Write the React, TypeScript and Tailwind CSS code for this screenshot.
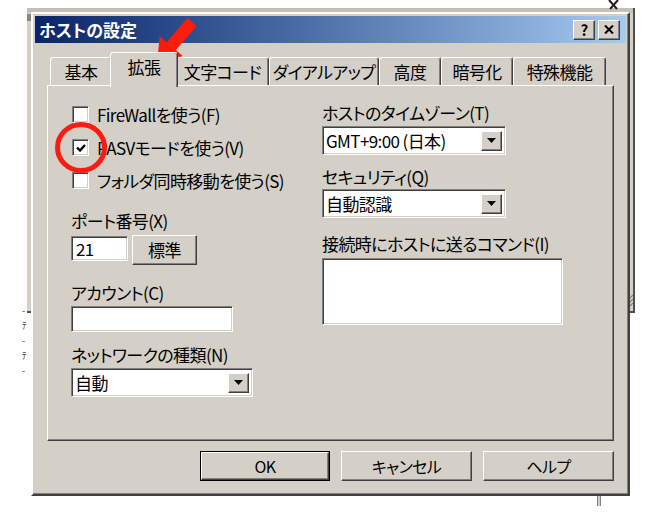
const raised =
  'border border-t-white border-l-white border-b-[#404040] border-r-[#404040] shadow-[inset_-1px_-1px_0_#808080]';
const sunken =
  'border border-t-[#808080] border-l-[#808080] border-b-white border-r-white shadow-[inset_1px_1px_0_#404040,inset_-1px_-1px_0_#d4d0c8]';

function Combo({ value, className }: { value: string; className: string }) {
  return (
    <div className={`flex items-center justify-between bg-white pl-[3px] pr-[3px] ${sunken} ${className}`}>
      <span className="leading-none">{value}</span>
      <div className={`flex h-[20px] w-[21px] items-center justify-center bg-[#d4d0c8] ${raised}`}>
        <svg width="9" height="5" viewBox="0 0 9 5">
          <path d="M0 0h9L4.5 5z" fill="#000" />
        </svg>
      </div>
    </div>
  );
}

function Check({ label, checked = false }: { label: string; checked?: boolean }) {
  return (
    <div className="flex h-[33px] items-center pl-px">
      <div className={`flex h-[17px] w-[17px] items-center justify-center bg-white ${sunken}`}>
        {checked && (
          <svg width="10" height="8" viewBox="0 0 10 8">
            <path d="M1 3.5l3 3 5-5.5" stroke="#000" strokeWidth="2.4" fill="none" />
          </svg>
        )}
      </div>
      <span className="ml-[8px]">{label}</span>
    </div>
  );
}

const tabs = [
  { label: '基本', w: 'w-[62px]' },
  { label: '拡張', w: 'w-[68px]', active: true },
  { label: '文字コード', w: 'w-[93px]' },
  { label: 'ダイアルアップ', w: 'w-[110px]' },
  { label: '高度', w: 'w-[62px]' },
  { label: '暗号化', w: 'w-[72px]' },
  { label: '特殊機能', w: 'w-[93px]' },
];

export default function App() {
  return (
    <div className="relative h-[520px] w-[660px] overflow-hidden bg-white font-['Noto_Sans_CJK_JP',sans-serif] text-[17px] tracking-[-0.6px] text-black [font-feature-settings:'palt']">
      {/* window behind the dialog */}
      <div className="absolute left-[27px] top-[8px] h-[305px] w-[608px] border-r-2 border-b-2 border-[#505050] bg-[#d4d0c8]">
        <div className="h-[5px] bg-[#c4c0b8]" />
        <div className="mt-px h-[7px] w-[4px] bg-[#8a8780]" />
        <svg className="absolute bottom-[4px] right-0" width="6" height="14" viewBox="0 0 6 14">
          <path d="M6 2L0 8M6 6L1 11M6 10L3 13" stroke="#808080" strokeWidth="1.2" />
        </svg>
      </div>
      <svg className="absolute left-[607px] top-0" width="14" height="10" viewBox="0 0 14 10">
        <path d="M2 0l8 9M11 0L3 9" stroke="#222" strokeWidth="2" />
      </svg>
      <div className="absolute left-[22px] top-[306px] flex flex-col gap-[5px] text-[9px] leading-[10px] text-[#333]">
        <span>-</span>
        <span>ﾃ</span>
        <span>-</span>
        <span>ﾃ</span>
        <span>-</span>
      </div>
      <div className="absolute left-[597px] top-[496px] h-[10px] w-[4px] border-x border-[#808080] bg-[#d4d0c8]" />

      {/* dialog */}
      <div className="absolute left-[31px] top-[12px] flex h-[484px] w-[599px] flex-col border-2 border-t-white border-l-white border-b-[#404040] border-r-[#404040] bg-[#d4d0c8] p-[2px] shadow-[inset_-1px_-1px_0_#808080]">
        <div className="flex h-[27px] shrink-0 items-center justify-between bg-linear-to-r from-[#0a246a] to-[#a6caf0] pl-[4px] pr-[6px]">
          <span className="text-[17px] font-bold tracking-normal text-white">ホストの設定</span>
          <div className="flex gap-[3px]">
            <div className={`flex h-[20px] w-[22px] items-center justify-center bg-[#d4d0c8] text-[15px] font-bold leading-none ${raised}`}>
              ?
            </div>
            <div className={`flex h-[20px] w-[22px] items-center justify-center bg-[#d4d0c8] ${raised}`}>
              <svg width="10" height="9" viewBox="0 0 10 9">
                <path d="M1 0.5l8 8M9 0.5l-8 8" stroke="#000" strokeWidth="2" />
              </svg>
            </div>
          </div>
        </div>

        <div className="flex flex-1 flex-col px-[12px] pt-[9px]">
          {/* tabs */}
          <div className="flex h-[33px] items-end pl-[3px]">
            {tabs.map((t) =>
              t.active ? (
                <div
                  key={t.label}
                  className={`relative z-10 -mx-[2px] -mb-[2px] flex h-[35px] items-center justify-center rounded-t-[3px] border-t border-l border-r border-t-white border-l-white border-r-[#404040] bg-[#d4d0c8] pb-[6px] shadow-[inset_-1px_0_0_#808080] ${t.w}`}
                >
                  {t.label}
                </div>
              ) : (
                <div
                  key={t.label}
                  className={`flex h-[28px] items-center justify-center rounded-t-[3px] border-t border-l border-r border-t-white border-l-white border-r-[#404040] pt-px shadow-[inset_-1px_0_0_#808080] ${t.w}`}
                >
                  {t.label}
                </div>
              ),
            )}
          </div>

          {/* panel */}
          <div className="flex h-[356px] shrink-0 border border-t-white border-l-white border-b-[#404040] border-r-[#404040] pl-[23px] shadow-[inset_-1px_-1px_0_#808080]">
            <div className="flex w-[251px] flex-col pt-[12px]">
              <Check label="FireWallを使う(F)" />
              <Check label="PASVモードを使う(V)" checked />
              <Check label="フォルダ同時移動を使う(S)" />
              <div className="mt-[14px] leading-[20px]">ポート番号(X)</div>
              <div className="mt-[4px] flex h-[30px] items-start">
                <div className={`mt-px flex h-[25px] w-[57px] items-center bg-white pl-[4px] ${sunken}`}>21</div>
                <div className={`ml-[4px] flex h-[30px] w-[65px] items-center justify-center ${raised}`}>標準</div>
              </div>
              <div className="mt-[18px] leading-[20px]">アカウント(C)</div>
              <div className={`mt-[3px] h-[26px] w-[162px] bg-white ${sunken}`} />
              <div className="mt-[13px] leading-[20px]">ネットワークの種類(N)</div>
              <Combo value="自動" className="mt-[3px] h-[29px] w-[182px]" />
            </div>
            <div className="flex flex-col pt-[17px]">
              <div className="leading-[20px]">ホストのタイムゾーン(T)</div>
              <Combo value="GMT+9:00 (日本)" className="mt-[3px] h-[29px] w-[184px]" />
              <div className="mt-[12px] leading-[20px]">セキュリティ(Q)</div>
              <Combo value="自動認識" className="mt-[2px] h-[29px] w-[184px]" />
              <div className="mt-[16px] leading-[20px]">接続時にホストに送るコマンド(I)</div>
              <div className={`mt-[4px] h-[67px] w-[241px] bg-white ${sunken}`} />
            </div>
          </div>

          {/* buttons */}
          <div className="mt-[10px] flex justify-end gap-[11px] text-[16px]">
            <div className="h-[30px] w-[130px] border border-black">
              <div className={`flex h-full items-center justify-center ${raised}`}>OK</div>
            </div>
            <div className={`flex h-[30px] w-[131px] items-center justify-center ${raised}`}>キャンセル</div>
            <div className={`flex h-[30px] w-[131px] items-center justify-center ${raised}`}>ヘルプ</div>
          </div>
        </div>
      </div>

      {/* annotations */}
      <svg className="pointer-events-none absolute left-0 top-0" width="660" height="520" viewBox="0 0 660 520">
        <ellipse cx="81" cy="147.5" rx="23.5" ry="23" fill="none" stroke="#ff1a12" strokeWidth="5" />
        <polygon
          points="157,63 182.7,55.9 175.8,50.1 196.6,25.9 187.4,18.1 166.6,42.3 159.7,36.5"
          fill="#ff1a0a"
        />
      </svg>
    </div>
  );
}
